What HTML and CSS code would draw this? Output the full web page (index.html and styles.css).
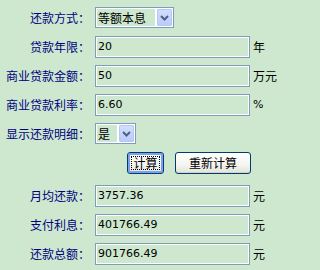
FILE: index.html
```html
<!DOCTYPE html>
<html lang="zh-CN">
<head>
<meta charset="utf-8">
<title>商业贷款计算器</title>
<link rel="stylesheet" href="styles.css">
</head>
<body>
<form class="calc">
  <div class="grid">
    <label class="lbl">还款方式：</label>
    <div class="ctrl">
      <div class="select select-type" role="listbox">
        <span class="sel-text">等额本息</span>
        <span class="sel-btn"><svg width="9" height="6" viewBox="0 0 9 6"><path d="M1 1 L4.5 4.5 L8 1" fill="none" stroke="#4d6185" stroke-width="2"/></svg></span>
      </div>
    </div>
    <span class="unit"></span>

    <label class="lbl">贷款年限：</label>
    <div class="ctrl"><input class="field" type="text" value="20"></div>
    <span class="unit">年</span>

    <label class="lbl">商业贷款金额：</label>
    <div class="ctrl"><input class="field" type="text" value="50"></div>
    <span class="unit">万元</span>

    <label class="lbl">商业贷款利率：</label>
    <div class="ctrl"><input class="field" type="text" value="6.60"></div>
    <span class="unit pct">%</span>

    <label class="lbl">显示还款明细：</label>
    <div class="ctrl">
      <div class="select select-yn" role="listbox">
        <span class="sel-text">是</span>
        <span class="sel-btn"><svg width="9" height="6" viewBox="0 0 9 6"><path d="M1 1 L4.5 4.5 L8 1" fill="none" stroke="#4d6185" stroke-width="2"/></svg></span>
      </div>
    </div>
    <span class="unit"></span>

    <div class="buttons">
      <button type="button" class="btn btn-calc"><span class="focus">计算</span></button>
      <button type="button" class="btn btn-reset">重新计算</button>
    </div>
  </div>

  <div class="grid results">
    <label class="lbl">月均还款：</label>
    <div class="ctrl"><input class="field" type="text" value="3757.36"></div>
    <span class="unit">元</span>

    <label class="lbl">支付利息：</label>
    <div class="ctrl"><input class="field" type="text" value="401766.49"></div>
    <span class="unit">元</span>

    <label class="lbl">还款总额：</label>
    <div class="ctrl"><input class="field" type="text" value="901766.49"></div>
    <span class="unit">元</span>
  </div>
</form>
</body>
</html>
```

FILE: styles.css
```css
html, body {
  margin: 0;
  padding: 0;
  background: #cde8cf;
}

body {
  width: 306px;
  height: 270px;
  overflow: hidden;
  font-family: "DejaVu Sans", "Noto Sans CJK SC", sans-serif;
  font-size: 12px;
  color: #000;
}

.calc {
  margin: 0;
  padding-top: 3px;
}

.grid {
  display: grid;
  grid-template-columns: 95px 155px auto;
  grid-auto-rows: 29px;
  align-items: center;
}

.results {
  margin-top: 4px;
}

.lbl {
  justify-self: end;
  padding-right: 5px;
  font-family: "Noto Sans CJK SC", sans-serif;
  font-size: 12px;
  line-height: 14px;
  color: #000080;
  white-space: nowrap;
}

.ctrl {
  display: flex;
  align-items: center;
}

.unit {
  padding-left: 3px;
  font-family: "Noto Sans CJK SC", sans-serif;
  font-size: 12px;
  color: #000;
}

.unit.pct {
  font-family: "DejaVu Sans", sans-serif;
  font-size: 11px;
  color: #000;
}

.field {
  box-sizing: border-box;
  width: 155px;
  height: 22px;
  margin: 0;
  padding: 0 0 0 2px;
  border: 1px solid #7f9db9;
  box-shadow: inset 0 0 0 1px #ffffff;
  background: #cde8cf;
  font-family: "DejaVu Sans", sans-serif;
  font-size: 11px;
  color: #000;
  outline: none;
}

.select {
  box-sizing: border-box;
  display: flex;
  align-items: stretch;
  height: 21px;
  padding: 1px;
  border: 1px solid #7f9db9;
  background: #ffffff;
}

.select-type {
  width: 79px;
}

.select-yn {
  width: 41px;
}

.sel-text {
  flex: 1;
  margin-right: 2px;
  padding-left: 1px;
  background: #cde8cf;
  font-family: "Noto Sans CJK SC", sans-serif;
  font-size: 12px;
  line-height: 17px;
  white-space: nowrap;
  overflow: hidden;
}

.sel-btn {
  box-sizing: border-box;
  width: 15px;
  display: flex;
  align-items: center;
  justify-content: center;
  border: 1px solid #b7c8f6;
  border-radius: 1px;
  background: linear-gradient(#d2defd, #b9cbf8);
}

.buttons {
  grid-column: 1 / -1;
  display: flex;
  gap: 11px;
  padding-left: 127px;
}

.btn {
  box-sizing: border-box;
  height: 22px;
  margin: 0;
  padding: 0;
  border: 1px solid #003c74;
  border-radius: 3px;
  background: linear-gradient(#ffffff 0%, #f4f4f0 60%, #e3e3db 100%);
  box-shadow: inset 0 -1px 0 #d6d0c5;
  font-family: "Noto Sans CJK SC", sans-serif;
  font-size: 12px;
  color: #000;
  display: flex;
  align-items: center;
  justify-content: center;
}

.btn-calc {
  width: 37px;
  box-shadow: inset 0 0 0 2px #7fa0ea;
}

.btn-calc .focus {
  box-sizing: border-box;
  width: 29px;
  height: 14px;
  line-height: 12px;
  border: 1px dotted #000;
  text-align: center;
}

.btn-reset {
  width: 76px;
}
```
